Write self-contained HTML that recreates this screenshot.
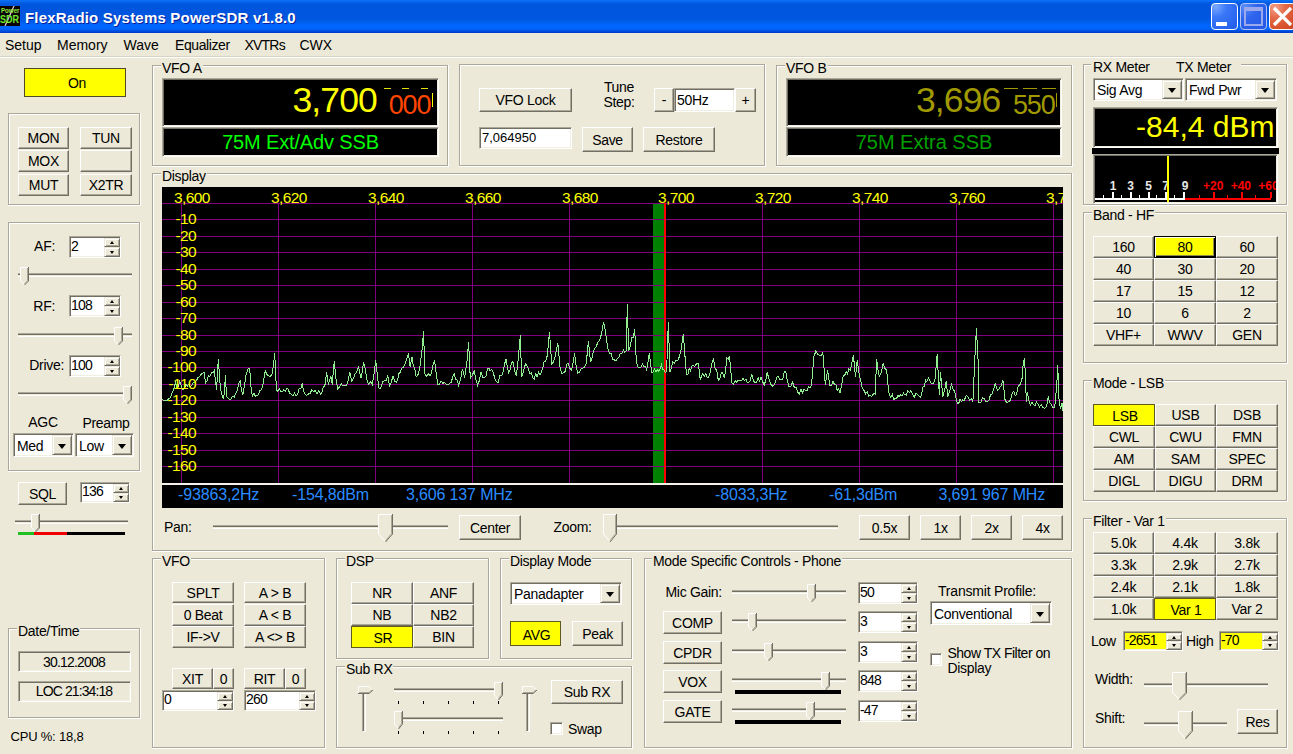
<!DOCTYPE html>
<html><head><meta charset="utf-8"><title>PowerSDR</title>
<style>
html,body{margin:0;padding:0}
body{-webkit-font-smoothing:antialiased;width:1293px;height:754px;overflow:hidden;position:relative;background:#ECE9D8;font-family:"Liberation Sans",sans-serif;font-size:13.5px;color:#000}
.a{position:absolute}
.t{position:absolute;white-space:nowrap}
.b{position:absolute;letter-spacing:-0.3px;box-sizing:border-box;background:#ECE9D8;border:1px solid;border-color:#fff #716F64 #716F64 #fff;box-shadow:inset -1px -1px #ACA899;display:flex;align-items:center;justify-content:center;white-space:nowrap;overflow:hidden}
.yb{position:absolute;letter-spacing:-0.3px;box-sizing:border-box;background:#FFFF00;border:1px solid #5E5A20;padding:2px 0 0 2px;display:flex;align-items:center;justify-content:center;white-space:nowrap;overflow:hidden}
.sb{position:absolute;box-sizing:border-box;background:#ECE9D8;border:1px solid;border-color:#ECE9D8 #716F64 #716F64 #ECE9D8;box-shadow:inset 1px 1px #fff,inset -1px -1px #ACA899}
.cb{position:absolute;box-sizing:border-box;background:#ECE9D8;border:1px solid;border-color:#ECE9D8 #716F64 #716F64 #ECE9D8;box-shadow:inset 1px 1px #fff,inset -1px -1px #ACA899}
.g{position:absolute;box-sizing:border-box;border:1px solid #ACA899;box-shadow:inset 1px 1px #fff,1px 1px #fff,0 1px #fff,1px 0 #fff}
.gl{position:absolute;letter-spacing:-0.3px;background:#ECE9D8;padding:0 1px;line-height:16px;white-space:nowrap}
.s{position:absolute;box-sizing:border-box;border:1px solid;border-color:#ACA899 #fff #fff #ACA899;box-shadow:inset 1px 1px #716F64,inset -1px -1px #F1EFE2}
.tr{position:absolute;box-sizing:border-box;border-top:1px solid #ACA899;border-bottom:1px solid #fff;box-shadow:inset 0 1px #716F64}
</style></head><body>
<div class="a" style="left:0;top:0;width:1293px;height:33px;background:linear-gradient(to bottom,#0A74F8 0px,#0A6AF0 1px,#045CE4 3px,#0055DD 5px,#0056DF 18px,#005EEA 22px,#0066FF 25px,#0064FC 29px,#0050E0 31px,#0038C4 33px)"></div>
<svg class="a" style="left:0px;top:6px" width="20" height="20" viewBox="0 0 20 20">
<rect x="0" y="0" width="20" height="20" fill="#0a0208"/>
<line x1="14" y1="0" x2="5" y2="20" stroke="#e0d0e0" stroke-width="1.2"/>
<text x="1" y="6.8" font-family="Liberation Sans" font-size="6.5" font-weight="bold" fill="#8CE83A" textLength="18.5" lengthAdjust="spacingAndGlyphs">Power</text>
<text x="0" y="16.6" font-family="Liberation Sans" font-size="10.5" font-weight="bold" fill="#6EEA2E" textLength="19" lengthAdjust="spacingAndGlyphs">SDR</text>
</svg>
<div class="t" style="left:25px;top:9px;font-size:15px;line-height:18px;font-weight:bold;color:#fff;letter-spacing:0.2px;text-shadow:1px 1px 0 #0A1E9A">FlexRadio Systems PowerSDR v1.8.0</div>
<div class="a" style="left:1211px;top:3px;width:27px;height:27px;box-sizing:border-box;border:1px solid #fff;border-radius:4px;background:radial-gradient(circle at 15% 10%,#7AA8FF 0%,#3A78F8 35%,#2A66F0 75%,#2258E0 100%)"></div>
<div class="a" style="left:1240px;top:3px;width:27px;height:27px;box-sizing:border-box;border:1px solid #B4C4F4;border-radius:4px;background:radial-gradient(circle at 15% 10%,#5A8CF8 0%,#2E64EE 40%,#2458E4 100%)"></div>
<div class="a" style="left:1269px;top:3px;width:27px;height:27px;box-sizing:border-box;border:1px solid #fff;border-radius:4px;background:radial-gradient(circle at 20% 15%,#F2A088 0%,#E46A48 35%,#D8532E 70%,#C84420 100%)"></div>
<div class="a" style="left:1216px;top:22px;width:11px;height:4px;background:#fff"></div>
<div class="a" style="left:1244px;top:7px;width:19px;height:19px;border:2px solid #9CA8EC;border-top-width:4px;box-sizing:border-box"></div>
<svg class="a" style="left:1269px;top:3px" width="26" height="27"><line x1="5" y1="5" x2="22" y2="22" stroke="#fff" stroke-width="3.2"/><line x1="22" y1="5" x2="5" y2="22" stroke="#fff" stroke-width="3.2"/></svg>
<div class="t" style="left:5px;top:37.17px;font-size:14px;line-height:17px;color:#000;font-weight:normal;letter-spacing:0px">Setup</div>
<div class="t" style="left:57px;top:37.17px;font-size:14px;line-height:17px;color:#000;font-weight:normal;letter-spacing:0px">Memory</div>
<div class="t" style="left:123.5px;top:37.17px;font-size:14px;line-height:17px;color:#000;font-weight:normal;letter-spacing:0px">Wave</div>
<div class="t" style="left:175px;top:37.17px;font-size:14px;line-height:17px;color:#000;font-weight:normal;letter-spacing:-0.4px">Equalizer</div>
<div class="t" style="left:244.5px;top:37.17px;font-size:14px;line-height:17px;color:#000;font-weight:normal;letter-spacing:-0.8px">XVTRs</div>
<div class="t" style="left:299.5px;top:37.17px;font-size:14px;line-height:17px;color:#000;font-weight:normal;letter-spacing:0px">CWX</div>
<div class="a" style="left:0px;top:57px;width:1293px;height:1px;background:#fff"></div>
<div class="a" style="left:0px;top:56px;width:1293px;height:1px;background:#D8D4C4"></div>
<div class="a" style="left:24px;top:68px;width:102px;height:29px;box-sizing:border-box;border:1px solid #4E4B26;background:#FFFF00"></div>
<div class="t" style="left:-223px;width:600px;text-align:center;top:75.17px;font-size:14px;line-height:17px;color:#000;font-weight:normal;letter-spacing:-0.3px;">On</div>
<div class="g" style="left:8px;top:113px;width:132px;height:92px"></div>
<div class="b" style="left:18px;top:127px;width:51px;height:22px;font-size:14px;"><span style="">MON</span></div>
<div class="b" style="left:80px;top:127px;width:52px;height:22px;font-size:14px;"><span style="">TUN</span></div>
<div class="b" style="left:18px;top:150px;width:51px;height:22px;font-size:14px;"><span style="">MOX</span></div>
<div class="b" style="left:80px;top:150px;width:52px;height:22px;font-size:14px;"><span style=""></span></div>
<div class="b" style="left:18px;top:174px;width:51px;height:22px;font-size:14px;"><span style="">MUT</span></div>
<div class="b" style="left:80px;top:174px;width:52px;height:22px;font-size:14px;"><span style="">X2TR</span></div>
<div class="g" style="left:8px;top:222px;width:132px;height:249px"></div>
<div class="t" style="left:-545px;width:600px;text-align:right;top:237.67px;font-size:14px;line-height:17px;color:#000;font-weight:normal;letter-spacing:-0.3px;">AF:</div>
<div class="s" style="left:69px;top:236px;width:52px;height:22px;background:#fff;"></div>
<div class="sb" style="left:104px;top:238px;width:16px;height:9px"></div>
<div class="sb" style="left:104px;top:247px;width:16px;height:10px"></div>
<div class="a" style="left:110px;top:241px;width:0;height:0;border-left:2.5px solid transparent;border-right:2.5px solid transparent;border-bottom:3px solid #000"></div>
<div class="a" style="left:110px;top:251px;width:0;height:0;border-left:2.5px solid transparent;border-right:2.5px solid transparent;border-top:3px solid #000"></div>
<div class="t" style="left:71px;top:237.66px;font-size:14px;line-height:17px;color:#000;font-weight:normal;letter-spacing:-0.8px">2</div>
<div class="tr" style="left:18px;top:273px;width:114px;height:4px"></div>
<svg class="a" style="left:20px;top:267px" width="10" height="19" viewBox="0 0 10 19">
<polygon points="0,0 9,0 9,14 4.5,18 0,14" fill="#ECE9D8"/>
<polyline points="0.5,14 0.5,0.5 8,0.5" fill="none" stroke="#fff" stroke-width="1"/>
<polyline points="0.5,14 4.5,17.5" fill="none" stroke="#fff" stroke-width="1"/>
<polyline points="8.5,0 8.5,14 4.5,18" fill="none" stroke="#716F64" stroke-width="1"/>
<polyline points="7.5,1 7.5,13.5 4.5,16.8" fill="none" stroke="#ACA899" stroke-width="1"/>
</svg>
<div class="t" style="left:-545px;width:600px;text-align:right;top:297.67px;font-size:14px;line-height:17px;color:#000;font-weight:normal;letter-spacing:-0.3px;">RF:</div>
<div class="s" style="left:69px;top:295px;width:52px;height:22px;background:#fff;"></div>
<div class="sb" style="left:104px;top:297px;width:16px;height:9px"></div>
<div class="sb" style="left:104px;top:306px;width:16px;height:10px"></div>
<div class="a" style="left:110px;top:300px;width:0;height:0;border-left:2.5px solid transparent;border-right:2.5px solid transparent;border-bottom:3px solid #000"></div>
<div class="a" style="left:110px;top:310px;width:0;height:0;border-left:2.5px solid transparent;border-right:2.5px solid transparent;border-top:3px solid #000"></div>
<div class="t" style="left:71px;top:296.66px;font-size:14px;line-height:17px;color:#000;font-weight:normal;letter-spacing:-0.8px">108</div>
<div class="tr" style="left:18px;top:333px;width:114px;height:4px"></div>
<svg class="a" style="left:114px;top:327px" width="10" height="19" viewBox="0 0 10 19">
<polygon points="0,0 9,0 9,14 4.5,18 0,14" fill="#ECE9D8"/>
<polyline points="0.5,14 0.5,0.5 8,0.5" fill="none" stroke="#fff" stroke-width="1"/>
<polyline points="0.5,14 4.5,17.5" fill="none" stroke="#fff" stroke-width="1"/>
<polyline points="8.5,0 8.5,14 4.5,18" fill="none" stroke="#716F64" stroke-width="1"/>
<polyline points="7.5,1 7.5,13.5 4.5,16.8" fill="none" stroke="#ACA899" stroke-width="1"/>
</svg>
<div class="t" style="left:-536px;width:600px;text-align:right;top:356.67px;font-size:14px;line-height:17px;color:#000;font-weight:normal;letter-spacing:-0.3px;">Drive:</div>
<div class="s" style="left:69px;top:355px;width:52px;height:22px;background:#fff;"></div>
<div class="sb" style="left:104px;top:357px;width:16px;height:9px"></div>
<div class="sb" style="left:104px;top:366px;width:16px;height:10px"></div>
<div class="a" style="left:110px;top:360px;width:0;height:0;border-left:2.5px solid transparent;border-right:2.5px solid transparent;border-bottom:3px solid #000"></div>
<div class="a" style="left:110px;top:370px;width:0;height:0;border-left:2.5px solid transparent;border-right:2.5px solid transparent;border-top:3px solid #000"></div>
<div class="t" style="left:71px;top:356.66px;font-size:14px;line-height:17px;color:#000;font-weight:normal;letter-spacing:-0.8px">100</div>
<div class="tr" style="left:18px;top:392px;width:114px;height:4px"></div>
<svg class="a" style="left:123px;top:386px" width="10" height="19" viewBox="0 0 10 19">
<polygon points="0,0 9,0 9,14 4.5,18 0,14" fill="#ECE9D8"/>
<polyline points="0.5,14 0.5,0.5 8,0.5" fill="none" stroke="#fff" stroke-width="1"/>
<polyline points="0.5,14 4.5,17.5" fill="none" stroke="#fff" stroke-width="1"/>
<polyline points="8.5,0 8.5,14 4.5,18" fill="none" stroke="#716F64" stroke-width="1"/>
<polyline points="7.5,1 7.5,13.5 4.5,16.8" fill="none" stroke="#ACA899" stroke-width="1"/>
</svg>
<div class="t" style="left:-257px;width:600px;text-align:center;top:413.67px;font-size:14px;line-height:17px;color:#000;font-weight:normal;letter-spacing:-0.3px;">AGC</div>
<div class="t" style="left:-194px;width:600px;text-align:center;top:414.67px;font-size:14px;line-height:17px;color:#000;font-weight:normal;letter-spacing:-0.3px;">Preamp</div>
<div class="s" style="left:13px;top:433px;width:61px;height:24px;background:#fff;"></div>
<div class="cb" style="left:52px;top:435px;width:20px;height:20px"></div>
<div class="a" style="left:57.5px;top:443.5px;width:0;height:0;border-left:4.5px solid transparent;border-right:4.5px solid transparent;border-top:5px solid #000"></div>
<div class="t" style="left:17px;top:437.66px;font-size:14px;line-height:17px;color:#000;font-weight:normal;letter-spacing:-0.3px;">Med</div>
<div class="s" style="left:75px;top:433px;width:59px;height:24px;background:#fff;"></div>
<div class="cb" style="left:112px;top:435px;width:20px;height:20px"></div>
<div class="a" style="left:117.5px;top:443.5px;width:0;height:0;border-left:4.5px solid transparent;border-right:4.5px solid transparent;border-top:5px solid #000"></div>
<div class="t" style="left:79px;top:437.66px;font-size:14px;line-height:17px;color:#000;font-weight:normal;letter-spacing:-0.3px;">Low</div>
<div class="b" style="left:18px;top:482px;width:49px;height:23px;font-size:14px;"><span style="">SQL</span></div>
<div class="s" style="left:80px;top:482px;width:50px;height:21px;background:#fff;"></div>
<div class="sb" style="left:113px;top:484px;width:16px;height:9px"></div>
<div class="sb" style="left:113px;top:493px;width:16px;height:9px"></div>
<div class="a" style="left:119px;top:487px;width:0;height:0;border-left:2.5px solid transparent;border-right:2.5px solid transparent;border-bottom:3px solid #000"></div>
<div class="a" style="left:119px;top:496px;width:0;height:0;border-left:2.5px solid transparent;border-right:2.5px solid transparent;border-top:3px solid #000"></div>
<div class="t" style="left:82px;top:483.16px;font-size:14px;line-height:17px;color:#000;font-weight:normal;letter-spacing:-0.8px">136</div>
<div class="tr" style="left:15px;top:520px;width:113px;height:4px"></div>
<svg class="a" style="left:31px;top:514px" width="10" height="19" viewBox="0 0 10 19">
<polygon points="0,0 9,0 9,14 4.5,18 0,14" fill="#ECE9D8"/>
<polyline points="0.5,14 0.5,0.5 8,0.5" fill="none" stroke="#fff" stroke-width="1"/>
<polyline points="0.5,14 4.5,17.5" fill="none" stroke="#fff" stroke-width="1"/>
<polyline points="8.5,0 8.5,14 4.5,18" fill="none" stroke="#716F64" stroke-width="1"/>
<polyline points="7.5,1 7.5,13.5 4.5,16.8" fill="none" stroke="#ACA899" stroke-width="1"/>
</svg>
<div class="a" style="left:18px;top:532px;width:16px;height:3px;background:#20C020"></div>
<div class="a" style="left:34px;top:532px;width:33px;height:3px;background:#F00000"></div>
<div class="a" style="left:67px;top:532px;width:58px;height:3px;background:#000"></div>
<div class="g" style="left:8px;top:628px;width:132px;height:90px"></div>
<div class="gl" style="left:17px;top:623px;font-size:14px">Date/Time</div>
<div class="s" style="left:18px;top:651px;width:113px;height:21px;background:#ECE9D8;"></div>
<div class="t" style="left:-226px;width:600px;text-align:center;top:654.17px;font-size:14px;line-height:17px;color:#000;font-weight:normal;letter-spacing:-0.8px">30.12.2008</div>
<div class="s" style="left:18px;top:681px;width:113px;height:21px;background:#ECE9D8;"></div>
<div class="t" style="left:-226px;width:600px;text-align:center;top:683.17px;font-size:14px;line-height:17px;color:#000;font-weight:normal;letter-spacing:-0.9px">LOC 21:34:18</div>
<div class="t" style="left:10.5px;top:729.30px;font-size:13px;line-height:16px;color:#000;font-weight:normal;letter-spacing:-0.2px">CPU %: 18,8</div>
<div class="g" style="left:152px;top:65px;width:296px;height:101px"></div>
<div class="gl" style="left:161px;top:60px;font-size:14px">VFO A</div>
<div class="s" style="left:162px;top:78px;width:277px;height:49px;background:#000;border-color:#ACA899 #fff #fff #ACA899"></div>
<div class="t" style="left:292.5px;top:79.12px;font-size:35.5px;line-height:43px;color:#FFFF00;font-weight:normal;letter-spacing:-0.9px">3,700</div>
<div class="a" style="left:164px;top:80px;width:273px;height:45px;overflow:hidden">
<div class="t" style="left:224.8px;top:9.28px;font-size:27px;line-height:32px;color:#FF4500;font-weight:normal;letter-spacing:-1.2px">000</div>
<div class="a" style="left:268px;top:13px;width:1px;height:14px;background:#FFFF00"></div>
</div>
<div class="a" style="left:384px;top:88px;width:7px;height:1px;background:#E0E000"></div>
<div class="a" style="left:402px;top:88px;width:7px;height:1px;background:#E0E000"></div>
<div class="a" style="left:421px;top:88px;width:7px;height:1px;background:#E0E000"></div>
<div class="s" style="left:162px;top:127px;width:277px;height:30px;background:#000;"></div>
<div class="t" style="left:0.5px;width:600px;text-align:center;top:129.59px;font-size:20px;line-height:24px;color:#00FF00;font-weight:normal;letter-spacing:-0.15px">75M Ext/Adv SSB</div>
<div class="g" style="left:459px;top:64px;width:306px;height:102px"></div>
<div class="b" style="left:479px;top:88px;width:93px;height:24px;font-size:14px;"><span style="">VFO Lock</span></div>
<div class="t" style="left:319px;width:600px;text-align:center;top:78.67px;font-size:14px;line-height:17px;color:#000;font-weight:normal;letter-spacing:-0.3px;">Tune</div>
<div class="t" style="left:319px;width:600px;text-align:center;top:93.67px;font-size:14px;line-height:17px;color:#000;font-weight:normal;letter-spacing:-0.3px;">Step:</div>
<div class="b" style="left:654px;top:88px;width:20px;height:24px;font-size:14px;"><span style="">-</span></div>
<div class="s" style="left:674px;top:88px;width:61px;height:24px;background:#fff;"></div>
<div class="t" style="left:677px;top:91.67px;font-size:14px;line-height:17px;color:#000;font-weight:normal;letter-spacing:-0.3px;">50Hz</div>
<div class="b" style="left:735px;top:88px;width:21px;height:24px;font-size:14px;"><span style="">+</span></div>
<div class="s" style="left:479px;top:127px;width:93px;height:22px;background:#fff;"></div>
<div class="t" style="left:482px;top:129.80px;font-size:13px;line-height:16px;color:#000;font-weight:normal;">7,064950</div>
<div class="b" style="left:582px;top:127px;width:51px;height:25px;font-size:14px;"><span style="">Save</span></div>
<div class="b" style="left:643px;top:127px;width:72px;height:25px;font-size:14px;"><span style="">Restore</span></div>
<div class="g" style="left:776px;top:65px;width:296px;height:101px"></div>
<div class="gl" style="left:785px;top:60px;font-size:14px">VFO B</div>
<div class="s" style="left:786px;top:78px;width:276px;height:49px;background:#000;"></div>
<div class="t" style="left:916px;top:79.12px;font-size:35.5px;line-height:43px;color:#A09A00;font-weight:normal;letter-spacing:-0.9px">3,696</div>
<div class="a" style="left:788px;top:80px;width:272px;height:45px;overflow:hidden">
<div class="t" style="left:225px;top:9.28px;font-size:27px;line-height:32px;color:#A09A00;font-weight:normal;letter-spacing:-1.2px">550</div>
<div class="a" style="left:268px;top:13px;width:1px;height:14px;background:#A09A00"></div>
</div>
<div class="a" style="left:1004px;top:88px;width:14px;height:1px;background:#A09A00"></div>
<div class="a" style="left:1023px;top:88px;width:14px;height:1px;background:#A09A00"></div>
<div class="a" style="left:1042px;top:88px;width:14px;height:1px;background:#A09A00"></div>
<div class="s" style="left:786px;top:127px;width:276px;height:30px;background:#000;"></div>
<div class="t" style="left:624px;width:600px;text-align:center;top:129.59px;font-size:20px;line-height:24px;color:#00A000;font-weight:normal;">75M Extra SSB</div>
<div class="g" style="left:1083px;top:64px;width:204px;height:141px"></div>
<div class="a" style="left:1091px;top:60px;width:150px;height:9px;background:#ECE9D8"></div>
<div class="t" style="left:1093px;top:58.67px;font-size:14px;line-height:17px;color:#000;font-weight:normal;letter-spacing:-0.3px;">RX Meter</div>
<div class="t" style="left:1176px;top:58.67px;font-size:14px;line-height:17px;color:#000;font-weight:normal;letter-spacing:-0.3px;">TX Meter</div>
<div class="s" style="left:1093px;top:78px;width:91px;height:23px;background:#fff;"></div>
<div class="cb" style="left:1162px;top:80px;width:20px;height:19px"></div>
<div class="a" style="left:1167.5px;top:88.0px;width:0;height:0;border-left:4.5px solid transparent;border-right:4.5px solid transparent;border-top:5px solid #000"></div>
<div class="t" style="left:1097px;top:82.16px;font-size:14px;line-height:17px;color:#000;font-weight:normal;letter-spacing:-0.3px;">Sig Avg</div>
<div class="s" style="left:1185px;top:78px;width:92px;height:23px;background:#fff;"></div>
<div class="cb" style="left:1255px;top:80px;width:20px;height:19px"></div>
<div class="a" style="left:1260.5px;top:88.0px;width:0;height:0;border-left:4.5px solid transparent;border-right:4.5px solid transparent;border-top:5px solid #000"></div>
<div class="t" style="left:1189px;top:82.16px;font-size:14px;line-height:17px;color:#000;font-weight:normal;letter-spacing:-0.3px;">Fwd Pwr</div>
<div class="s" style="left:1093px;top:107px;width:185px;height:41px;background:#000;"></div>
<div class="t" style="left:674.5px;width:600px;text-align:right;top:108.58px;font-size:30px;line-height:36px;color:#FFFF00;font-weight:normal;">-84,4 dBm</div>
<div class="a" style="left:1092px;top:148px;width:187px;height:6px;background:#000"></div>
<div class="s" style="left:1093px;top:154px;width:185px;height:50px;background:#000;"></div>
<div class="a" style="left:1095px;top:198px;width:90px;height:2px;background:#fff"></div>
<div class="a" style="left:1185px;top:198px;width:86px;height:2px;background:#F00"></div>
<div class="a" style="left:1112px;top:192px;width:2px;height:6px;background:#fff"></div>
<div class="a" style="left:1130px;top:192px;width:2px;height:6px;background:#fff"></div>
<div class="a" style="left:1148px;top:192px;width:2px;height:6px;background:#fff"></div>
<div class="a" style="left:1165px;top:192px;width:2px;height:6px;background:#fff"></div>
<div class="a" style="left:1183px;top:192px;width:2px;height:6px;background:#fff"></div>
<div class="a" style="left:1103px;top:195px;width:1px;height:3px;background:#fff"></div>
<div class="a" style="left:1121px;top:195px;width:1px;height:3px;background:#fff"></div>
<div class="a" style="left:1139px;top:195px;width:1px;height:3px;background:#fff"></div>
<div class="a" style="left:1156px;top:195px;width:1px;height:3px;background:#fff"></div>
<div class="a" style="left:1174px;top:195px;width:1px;height:3px;background:#fff"></div>
<div class="a" style="left:1213px;top:192px;width:2px;height:6px;background:#F00"></div>
<div class="a" style="left:1241px;top:192px;width:2px;height:6px;background:#F00"></div>
<div class="a" style="left:1270px;top:192px;width:2px;height:6px;background:#F00"></div>
<div class="a" style="left:1199px;top:195px;width:1px;height:3px;background:#F00"></div>
<div class="a" style="left:1227px;top:195px;width:1px;height:3px;background:#F00"></div>
<div class="a" style="left:1255px;top:195px;width:1px;height:3px;background:#F00"></div>
<div class="t" style="left:813.2px;width:600px;text-align:center;top:178.93px;font-size:12px;line-height:14px;color:#E8E8E8;font-weight:bold;">1</div>
<div class="t" style="left:830.5px;width:600px;text-align:center;top:178.93px;font-size:12px;line-height:14px;color:#E8E8E8;font-weight:bold;">3</div>
<div class="t" style="left:848.5px;width:600px;text-align:center;top:178.93px;font-size:12px;line-height:14px;color:#E8E8E8;font-weight:bold;">5</div>
<div class="t" style="left:865.5px;width:600px;text-align:center;top:178.93px;font-size:12px;line-height:14px;color:#E8E8E8;font-weight:bold;">7</div>
<div class="t" style="left:885px;width:600px;text-align:center;top:178.93px;font-size:12px;line-height:14px;color:#E8E8E8;font-weight:bold;">9</div>
<div class="a" style="left:1095px;top:156px;width:181px;height:46px;overflow:hidden">
<div class="t" style="left:-181.79999999999995px;width:600px;text-align:center;top:22.93px;font-size:12px;line-height:14px;color:#FF0000;font-weight:bold;">+20</div>
<div class="t" style="left:-154.20000000000005px;width:600px;text-align:center;top:22.93px;font-size:12px;line-height:14px;color:#FF0000;font-weight:bold;">+40</div>
<div class="t" style="left:-126.5px;width:600px;text-align:center;top:22.93px;font-size:12px;line-height:14px;color:#FF0000;font-weight:bold;">+60</div>
</div>
<div class="a" style="left:1167px;top:156px;width:2px;height:46px;background:#FFFF00"></div>
<div class="g" style="left:1083px;top:212px;width:204px;height:151px"></div>
<div class="gl" style="left:1092px;top:207px;font-size:14px">Band - HF</div>
<div class="b" style="left:1093px;top:236px;width:61px;height:22px;font-size:14px;"><span style="">160</span></div>
<div class="a" style="left:1154px;top:236px;width:62px;height:22px;box-sizing:border-box;background:#FFFF00;border:1px solid #000;box-shadow:inset 1px 1px #FFFFE8,inset -1px -1px #000,inset -2px -2px #8F8B4A;display:flex;align-items:center;justify-content:center;font-size:14px;letter-spacing:-0.3px"><span>80</span></div>
<div class="b" style="left:1216px;top:236px;width:62px;height:22px;font-size:14px;"><span style="">60</span></div>
<div class="b" style="left:1093px;top:258px;width:61px;height:22px;font-size:14px;"><span style="">40</span></div>
<div class="b" style="left:1154px;top:258px;width:62px;height:22px;font-size:14px;"><span style="">30</span></div>
<div class="b" style="left:1216px;top:258px;width:62px;height:22px;font-size:14px;"><span style="">20</span></div>
<div class="b" style="left:1093px;top:280px;width:61px;height:22px;font-size:14px;"><span style="">17</span></div>
<div class="b" style="left:1154px;top:280px;width:62px;height:22px;font-size:14px;"><span style="">15</span></div>
<div class="b" style="left:1216px;top:280px;width:62px;height:22px;font-size:14px;"><span style="">12</span></div>
<div class="b" style="left:1093px;top:302px;width:61px;height:22px;font-size:14px;"><span style="">10</span></div>
<div class="b" style="left:1154px;top:302px;width:62px;height:22px;font-size:14px;"><span style="">6</span></div>
<div class="b" style="left:1216px;top:302px;width:62px;height:22px;font-size:14px;"><span style="">2</span></div>
<div class="b" style="left:1093px;top:324px;width:61px;height:22px;font-size:14px;"><span style="">VHF+</span></div>
<div class="b" style="left:1154px;top:324px;width:62px;height:22px;font-size:14px;"><span style="">WWV</span></div>
<div class="b" style="left:1216px;top:324px;width:62px;height:22px;font-size:14px;"><span style="">GEN</span></div>
<div class="g" style="left:1083px;top:380px;width:204px;height:121px"></div>
<div class="gl" style="left:1092px;top:375px;font-size:14px">Mode - LSB</div>
<div class="yb" style="left:1093px;top:404px;width:62px;height:22px;font-size:14px;"><span>LSB</span></div>
<div class="b" style="left:1155px;top:404px;width:61px;height:22px;font-size:14px;"><span style="">USB</span></div>
<div class="b" style="left:1216px;top:404px;width:62px;height:22px;font-size:14px;"><span style="">DSB</span></div>
<div class="b" style="left:1093px;top:426px;width:62px;height:22px;font-size:14px;"><span style="">CWL</span></div>
<div class="b" style="left:1155px;top:426px;width:61px;height:22px;font-size:14px;"><span style="">CWU</span></div>
<div class="b" style="left:1216px;top:426px;width:62px;height:22px;font-size:14px;"><span style="">FMN</span></div>
<div class="b" style="left:1093px;top:448px;width:62px;height:22px;font-size:14px;"><span style="">AM</span></div>
<div class="b" style="left:1155px;top:448px;width:61px;height:22px;font-size:14px;"><span style="">SAM</span></div>
<div class="b" style="left:1216px;top:448px;width:62px;height:22px;font-size:14px;"><span style="">SPEC</span></div>
<div class="b" style="left:1093px;top:470px;width:62px;height:22px;font-size:14px;"><span style="">DIGL</span></div>
<div class="b" style="left:1155px;top:470px;width:61px;height:22px;font-size:14px;"><span style="">DIGU</span></div>
<div class="b" style="left:1216px;top:470px;width:62px;height:22px;font-size:14px;"><span style="">DRM</span></div>
<div class="g" style="left:1083px;top:518px;width:204px;height:230px"></div>
<div class="gl" style="left:1092px;top:513px;font-size:14px">Filter - Var 1</div>
<div class="b" style="left:1093px;top:532px;width:61px;height:22px;font-size:14px;"><span style="">5.0k</span></div>
<div class="b" style="left:1154px;top:532px;width:62px;height:22px;font-size:14px;"><span style="">4.4k</span></div>
<div class="b" style="left:1216px;top:532px;width:62px;height:22px;font-size:14px;"><span style="">3.8k</span></div>
<div class="b" style="left:1093px;top:554px;width:61px;height:22px;font-size:14px;"><span style="">3.3k</span></div>
<div class="b" style="left:1154px;top:554px;width:62px;height:22px;font-size:14px;"><span style="">2.9k</span></div>
<div class="b" style="left:1216px;top:554px;width:62px;height:22px;font-size:14px;"><span style="">2.7k</span></div>
<div class="b" style="left:1093px;top:576px;width:61px;height:22px;font-size:14px;"><span style="">2.4k</span></div>
<div class="b" style="left:1154px;top:576px;width:62px;height:22px;font-size:14px;"><span style="">2.1k</span></div>
<div class="b" style="left:1216px;top:576px;width:62px;height:22px;font-size:14px;"><span style="">1.8k</span></div>
<div class="b" style="left:1093px;top:598px;width:61px;height:22px;font-size:14px;"><span style="">1.0k</span></div>
<div class="yb" style="left:1154px;top:598px;width:62px;height:22px;font-size:14px;"><span>Var 1</span></div>
<div class="b" style="left:1216px;top:598px;width:62px;height:22px;font-size:14px;"><span style="">Var 2</span></div>
<div class="t" style="left:1091px;top:632.67px;font-size:14px;line-height:17px;color:#000;font-weight:normal;letter-spacing:-0.3px;">Low</div>
<div class="s" style="left:1123px;top:631px;width:60px;height:20px;background:#fff;"></div>
<div class="a" style="left:1125px;top:633px;width:41px;height:16px;background:#FFFF00"></div>
<div class="sb" style="left:1166px;top:633px;width:16px;height:8px"></div>
<div class="sb" style="left:1166px;top:641px;width:16px;height:9px"></div>
<div class="a" style="left:1172px;top:636px;width:0;height:0;border-left:2.5px solid transparent;border-right:2.5px solid transparent;border-bottom:3px solid #000"></div>
<div class="a" style="left:1172px;top:644px;width:0;height:0;border-left:2.5px solid transparent;border-right:2.5px solid transparent;border-top:3px solid #000"></div>
<div class="t" style="left:1125px;top:631.66px;font-size:14px;line-height:17px;color:#000;font-weight:normal;letter-spacing:-0.8px">-2651</div>
<div class="t" style="left:1186px;top:632.67px;font-size:14px;line-height:17px;color:#000;font-weight:normal;letter-spacing:-0.3px;">High</div>
<div class="s" style="left:1219px;top:631px;width:60px;height:20px;background:#fff;"></div>
<div class="a" style="left:1221px;top:633px;width:41px;height:16px;background:#FFFF00"></div>
<div class="sb" style="left:1262px;top:633px;width:16px;height:8px"></div>
<div class="sb" style="left:1262px;top:641px;width:16px;height:9px"></div>
<div class="a" style="left:1268px;top:636px;width:0;height:0;border-left:2.5px solid transparent;border-right:2.5px solid transparent;border-bottom:3px solid #000"></div>
<div class="a" style="left:1268px;top:644px;width:0;height:0;border-left:2.5px solid transparent;border-right:2.5px solid transparent;border-top:3px solid #000"></div>
<div class="t" style="left:1221px;top:631.66px;font-size:14px;line-height:17px;color:#000;font-weight:normal;letter-spacing:-0.8px">-70</div>
<div class="t" style="left:1095px;top:670.67px;font-size:14px;line-height:17px;color:#000;font-weight:normal;letter-spacing:-0.3px;">Width:</div>
<div class="tr" style="left:1144px;top:683px;width:124px;height:4px"></div>
<svg class="a" style="left:1172px;top:672px" width="16" height="29" viewBox="0 0 16 29">
<polygon points="0,0 15,0 15,21 7.5,28 0,21" fill="#ECE9D8"/>
<polyline points="0.5,21 0.5,0.5 14,0.5" fill="none" stroke="#fff" stroke-width="1"/>
<polyline points="0.5,21 7.5,27.5" fill="none" stroke="#fff" stroke-width="1"/>
<polyline points="14.5,0 14.5,21 7.5,28" fill="none" stroke="#716F64" stroke-width="1"/>
<polyline points="13.5,1 13.5,20.5 7.5,26.8" fill="none" stroke="#ACA899" stroke-width="1"/>
</svg>
<div class="t" style="left:1095px;top:710.17px;font-size:14px;line-height:17px;color:#000;font-weight:normal;letter-spacing:-0.3px;">Shift:</div>
<div class="tr" style="left:1144px;top:722px;width:83px;height:4px"></div>
<svg class="a" style="left:1178px;top:711px" width="16" height="29" viewBox="0 0 16 29">
<polygon points="0,0 15,0 15,20 7.5,28 0,20" fill="#ECE9D8"/>
<polyline points="0.5,20 0.5,0.5 14,0.5" fill="none" stroke="#fff" stroke-width="1"/>
<polyline points="0.5,20 7.5,27.5" fill="none" stroke="#fff" stroke-width="1"/>
<polyline points="14.5,0 14.5,20 7.5,28" fill="none" stroke="#716F64" stroke-width="1"/>
<polyline points="13.5,1 13.5,19.5 7.5,26.8" fill="none" stroke="#ACA899" stroke-width="1"/>
</svg>
<div class="b" style="left:1237px;top:709px;width:41px;height:25px;font-size:14px;"><span style="">Res</span></div>
<div class="g" style="left:152px;top:173px;width:920px;height:378px"></div>
<div class="gl" style="left:161px;top:168px;font-size:14px">Display</div>
<div class="a" style="left:162px;top:187px;width:901px;height:296px;background:#000;overflow:hidden"></div>
<svg class="a" style="left:162px;top:187px" width="901" height="296" viewBox="162 187 901 296">
<line x1="162" y1="203.5" x2="1063" y2="203.5" stroke="#800080" stroke-width="1"/>
<line x1="162" y1="219.5" x2="1063" y2="219.5" stroke="#800080" stroke-width="1"/>
<line x1="162" y1="236.5" x2="1063" y2="236.5" stroke="#800080" stroke-width="1"/>
<line x1="162" y1="252.5" x2="1063" y2="252.5" stroke="#800080" stroke-width="1"/>
<line x1="162" y1="269.5" x2="1063" y2="269.5" stroke="#800080" stroke-width="1"/>
<line x1="162" y1="285.5" x2="1063" y2="285.5" stroke="#800080" stroke-width="1"/>
<line x1="162" y1="302.5" x2="1063" y2="302.5" stroke="#800080" stroke-width="1"/>
<line x1="162" y1="318.5" x2="1063" y2="318.5" stroke="#800080" stroke-width="1"/>
<line x1="162" y1="335.5" x2="1063" y2="335.5" stroke="#800080" stroke-width="1"/>
<line x1="162" y1="351.5" x2="1063" y2="351.5" stroke="#800080" stroke-width="1"/>
<line x1="162" y1="367.5" x2="1063" y2="367.5" stroke="#800080" stroke-width="1"/>
<line x1="162" y1="384.5" x2="1063" y2="384.5" stroke="#800080" stroke-width="1"/>
<line x1="162" y1="400.5" x2="1063" y2="400.5" stroke="#800080" stroke-width="1"/>
<line x1="162" y1="417.5" x2="1063" y2="417.5" stroke="#800080" stroke-width="1"/>
<line x1="162" y1="433.5" x2="1063" y2="433.5" stroke="#800080" stroke-width="1"/>
<line x1="162" y1="450.5" x2="1063" y2="450.5" stroke="#800080" stroke-width="1"/>
<line x1="162" y1="466.5" x2="1063" y2="466.5" stroke="#800080" stroke-width="1"/>
<rect x="653" y="203" width="11" height="280" fill="#008000"/>
<line x1="653" y1="203.5" x2="664" y2="203.5" stroke="#800080" stroke-width="1"/>
<line x1="653" y1="219.5" x2="664" y2="219.5" stroke="#800080" stroke-width="1"/>
<line x1="653" y1="236.5" x2="664" y2="236.5" stroke="#800080" stroke-width="1"/>
<line x1="653" y1="252.5" x2="664" y2="252.5" stroke="#800080" stroke-width="1"/>
<line x1="653" y1="269.5" x2="664" y2="269.5" stroke="#800080" stroke-width="1"/>
<line x1="653" y1="285.5" x2="664" y2="285.5" stroke="#800080" stroke-width="1"/>
<line x1="653" y1="302.5" x2="664" y2="302.5" stroke="#800080" stroke-width="1"/>
<line x1="653" y1="318.5" x2="664" y2="318.5" stroke="#800080" stroke-width="1"/>
<line x1="653" y1="335.5" x2="664" y2="335.5" stroke="#800080" stroke-width="1"/>
<line x1="653" y1="351.5" x2="664" y2="351.5" stroke="#800080" stroke-width="1"/>
<line x1="653" y1="367.5" x2="664" y2="367.5" stroke="#800080" stroke-width="1"/>
<line x1="653" y1="384.5" x2="664" y2="384.5" stroke="#800080" stroke-width="1"/>
<line x1="653" y1="400.5" x2="664" y2="400.5" stroke="#800080" stroke-width="1"/>
<line x1="653" y1="417.5" x2="664" y2="417.5" stroke="#800080" stroke-width="1"/>
<line x1="653" y1="433.5" x2="664" y2="433.5" stroke="#800080" stroke-width="1"/>
<line x1="653" y1="450.5" x2="664" y2="450.5" stroke="#800080" stroke-width="1"/>
<line x1="653" y1="466.5" x2="664" y2="466.5" stroke="#800080" stroke-width="1"/>
<line x1="181.5" y1="203" x2="181.5" y2="483" stroke="#800080" stroke-width="1"/>
<line x1="278.5" y1="203" x2="278.5" y2="483" stroke="#800080" stroke-width="1"/>
<line x1="375.5" y1="203" x2="375.5" y2="483" stroke="#800080" stroke-width="1"/>
<line x1="472.5" y1="203" x2="472.5" y2="483" stroke="#800080" stroke-width="1"/>
<line x1="569.5" y1="203" x2="569.5" y2="483" stroke="#800080" stroke-width="1"/>
<line x1="762.5" y1="203" x2="762.5" y2="483" stroke="#800080" stroke-width="1"/>
<line x1="859.5" y1="203" x2="859.5" y2="483" stroke="#800080" stroke-width="1"/>
<line x1="956.5" y1="203" x2="956.5" y2="483" stroke="#800080" stroke-width="1"/>
<line x1="1053.5" y1="203" x2="1053.5" y2="483" stroke="#800080" stroke-width="1"/>
<rect x="664" y="203" width="2" height="280" fill="#FF0000"/>
<polyline fill="none" stroke="#90EE90" stroke-width="1" shape-rendering="crispEdges" points="161.7,398.3 163.4,400.5 165.2,400.0 166.9,400.6 168.6,399.0 170.3,397.9 172.0,393.0 173.8,388.8 175.5,382.8 177.2,388.0 178.5,386.2 179.8,381.0 182.4,389.7 184.2,388.5 185.9,384.5 187.3,386.0 188.8,384.0 190.2,386.2 191.6,385.9 193.1,382.4 194.5,382.8 196.2,381.1 198.0,377.6 199.7,376.8 201.4,374.0 204.0,372.4 205.7,382.8 207.0,380.9 208.3,375.9 210.0,376.4 211.7,372.4 213.0,372.6 214.3,370.7 216.6,389.7 218.3,359.5 220.0,382.8 221.2,393.0 222.5,396.8 223.8,398.3 225.5,375.0 226.4,396.6 229.0,399.0 230.7,399.7 232.4,396.6 234.2,397.2 235.9,393.0 237.3,390.8 238.8,383.5 240.2,381.0 241.5,390.4 242.8,394.8 244.5,385.3 246.2,374.1 248.0,369.0 249.7,368.0 251.4,393.0 252.7,395.9 254.0,393.1 255.3,396.1 256.6,395.7 258.3,394.7 260.0,390.4 261.7,389.7 263.4,382.4 265.2,370.7 266.9,374.4 268.6,375.9 270.3,376.7 272.0,374.0 273.4,365.6 274.7,353.4 276.4,389.7 277.8,391.7 279.3,389.1 280.7,391.4 282.2,392.0 283.8,389.8 285.3,391.5 286.9,388.1 288.4,389.7 289.7,393.4 291.0,394.0 292.7,395.9 294.5,393.3 296.2,395.7 297.7,394.2 299.2,388.3 300.7,388.8 302.2,383.6 303.5,390.8 304.8,394.0 306.6,395.2 308.4,394.0 310.1,393.6 311.9,389.7 313.6,391.8 315.3,390.5 317.0,394.0 318.8,390.8 320.5,394.0 321.9,392.7 323.4,386.3 324.8,386.2 326.6,372.4 328.3,384.5 330.9,375.9 332.2,384.5 334.3,361.2 336.0,379.3 337.8,388.8 339.5,387.2 341.2,383.6 342.9,386.0 344.7,385.3 346.4,385.2 348.1,381.0 349.8,372.4 351.6,381.0 353.3,378.6 355.0,374.0 356.7,371.8 358.4,366.4 359.7,372.9 361.0,377.6 362.3,371.7 363.6,362.0 365.3,369.0 367.1,381.0 368.8,384.3 370.5,381.6 372.2,384.5 373.9,374.7 375.7,360.3 377.4,375.9 379.1,388.8 380.8,388.2 382.6,381.8 384.3,381.0 386.1,380.2 387.8,375.9 389.5,386.2 391.2,382.6 393.0,375.9 394.7,381.1 396.4,381.9 397.7,380.0 399.0,373.3 400.3,372.3 401.6,368.1 403.3,367.9 405.0,363.8 406.7,359.5 408.4,353.4 410.2,367.2 411.9,356.9 413.3,365.5 414.8,368.2 416.2,376.7 417.9,374.9 419.7,368.1 422.2,348.3 423.6,331.0 424.8,373.3 426.5,376.4 428.3,373.7 430.0,375.9 431.6,372.5 433.1,364.2 434.7,361.2 436.2,373.7 437.8,384.5 439.5,384.3 441.2,381.0 442.9,383.3 444.7,382.3 446.4,384.5 448.2,384.6 450.0,382.8 451.4,382.0 452.9,376.0 454.3,374.1 455.7,379.1 457.2,380.1 458.6,385.3 460.5,379.4 462.4,369.0 464.7,377.6 467.2,359.5 468.6,342.2 470.3,378.4 472.2,375.5 474.1,370.7 475.9,379.6 477.6,385.3 479.3,380.6 481.0,372.4 482.8,377.3 484.5,377.6 485.9,376.6 487.4,369.0 488.8,368.1 490.2,370.8 491.7,369.5 493.1,372.4 494.9,378.6 496.6,381.9 498.3,382.2 500.0,375.5 501.7,375.9 503.1,371.5 504.6,363.9 506.0,359.5 507.3,367.1 508.6,372.4 510.0,369.9 511.5,363.3 512.9,361.2 514.6,370.4 516.4,375.9 517.7,364.2 519.0,350.0 520.3,335.3 521.6,376.7 523.0,373.2 524.5,366.6 525.9,363.8 528.4,369.0 529.9,373.3 531.3,373.0 532.8,377.6 534.2,379.2 535.7,373.9 537.1,376.7 538.5,372.3 540.0,375.2 541.4,372.4 542.7,368.1 544.0,362.0 545.7,360.9 547.4,355.2 549.5,331.9 551.7,363.8 553.5,362.0 555.2,356.0 557.8,343.1 560.3,369.8 562.0,373.4 563.8,372.4 565.2,371.4 566.7,364.6 568.1,362.9 569.9,368.3 571.6,370.7 573.0,363.0 574.5,353.4 576.0,365.2 577.6,373.3 579.3,372.5 581.1,368.9 582.8,368.1 584.5,367.1 586.2,363.8 588.4,341.4 590.5,362.0 591.9,358.5 593.4,351.5 594.8,348.3 596.3,346.6 597.8,342.3 599.3,340.5 600.6,337.3 601.9,331.9 603.6,321.6 605.3,330.2 606.6,340.6 607.9,349.1 609.4,353.1 611.0,353.5 612.5,359.2 614.0,359.5 615.7,360.9 617.4,358.6 618.9,357.5 620.4,353.1 621.9,353.5 623.4,350.0 624.7,352.3 626.0,351.7 627.4,304.3 628.6,350.9 630.1,346.5 631.7,337.9 633.2,337.2 634.7,329.3 636.4,362.0 637.7,366.6 639.0,368.1 640.7,367.6 642.4,363.8 643.8,366.7 645.3,366.8 646.7,369.8 649.3,353.4 650.6,364.3 651.9,372.4 653.2,372.0 654.5,369.0 655.9,372.1 657.4,369.7 658.8,371.6 660.1,369.0 661.4,364.7 662.7,369.7 664.0,369.8 665.3,372.4 666.6,371.6 668.3,322.4 670.0,372.4 671.3,368.2 672.6,362.0 674.3,363.2 676.1,360.0 677.8,360.3 679.5,356.4 681.2,349.1 683.3,333.6 684.8,353.9 686.4,374.1 687.8,374.8 689.2,368.4 690.5,370.9 691.9,366.0 693.3,365.5 695.0,366.4 696.7,363.3 698.4,363.8 700.2,379.3 702.8,373.3 704.3,376.3 705.8,373.3 707.3,378.0 708.8,376.7 710.3,372.0 711.9,363.5 713.4,358.6 715.0,368.0 716.7,370.5 718.3,380.2 719.7,379.8 721.2,372.8 722.6,372.4 724.3,378.4 725.6,370.3 726.9,357.8 728.2,359.0 729.5,356.0 730.8,371.0 732.1,383.6 733.6,384.4 735.1,380.5 736.6,381.9 738.1,380.2 740.0,380.2 741.5,380.8 743.0,378.5 744.5,380.8 746.0,379.3 747.3,383.0 748.6,382.8 750.2,380.9 751.7,374.1 753.2,380.0 754.7,382.8 756.4,382.6 758.1,377.6 759.5,381.2 761.0,377.4 762.4,381.0 764.1,385.3 765.7,380.3 767.2,372.4 769.1,379.6 771.0,384.5 772.3,386.1 773.6,385.3 775.0,383.3 776.5,377.9 777.9,375.9 779.6,379.5 781.4,379.3 782.8,379.1 784.3,371.9 785.7,371.6 787.4,381.0 789.1,387.1 790.9,386.4 792.6,381.9 794.3,387.5 796.1,387.8 797.8,392.2 799.3,393.8 800.9,389.2 802.4,393.3 804.0,388.8 805.5,390.5 807.0,390.6 808.5,386.4 810.1,388.1 811.6,384.5 813.8,356.9 815.9,350.9 817.6,354.4 819.3,355.2 821.0,356.1 822.8,352.6 825.3,384.5 827.6,369.8 829.7,385.3 831.4,385.6 833.1,381.0 834.5,384.9 835.9,384.4 837.2,390.7 838.6,388.6 840.0,393.1 841.7,385.1 843.4,375.0 844.8,375.0 846.2,371.9 847.5,374.2 848.9,368.7 850.3,369.8 851.8,363.5 853.4,355.2 855.5,376.7 857.2,360.3 859.0,372.9 860.7,381.0 862.4,388.2 864.1,390.5 865.6,393.7 867.2,391.7 868.7,396.1 870.2,395.7 871.9,396.2 873.6,393.7 875.3,394.0 876.6,358.6 878.0,370.1 879.3,376.7 881.2,372.2 883.1,363.8 884.9,368.5 886.6,369.8 888.0,384.7 889.3,394.8 890.8,397.2 892.3,394.3 893.8,399.6 895.3,398.3 896.6,398.6 897.9,395.3 899.2,397.0 900.5,394.8 901.9,396.0 903.4,393.0 904.8,394.8 906.3,395.0 907.8,391.1 909.4,392.6 910.9,390.5 912.6,394.8 914.3,397.0 916.1,393.2 917.8,394.5 920.3,397.4 921.6,394.7 922.9,387.0 924.2,386.8 925.5,380.2 926.9,381.7 928.4,377.8 929.8,380.2 931.1,383.6 932.4,383.6 933.7,383.2 935.0,379.3 937.2,354.3 939.3,394.8 940.5,372.4 942.8,396.6 944.5,390.5 946.2,381.0 947.9,396.6 949.6,391.4 951.4,384.5 953.1,389.5 954.8,391.4 956.1,398.5 957.4,403.4 958.7,403.4 960.0,399.5 961.3,401.9 962.6,400.0 964.3,400.5 966.1,395.7 967.8,396.6 969.5,400.0 971.2,398.6 972.9,401.7 975.0,355.2 976.4,328.4 978.1,360.3 979.0,402.6 980.7,402.8 982.4,398.0 984.1,398.3 985.9,402.1 987.6,401.7 989.0,400.1 990.5,394.8 991.9,394.0 993.6,389.6 995.3,382.8 996.6,387.9 997.9,390.5 1000.0,387.1 1001.5,385.6 1002.9,379.8 1005.1,400.3 1007.0,402.7 1008.8,401.7 1010.5,400.1 1012.2,392.8 1013.9,391.5 1015.3,395.9 1016.8,393.5 1018.2,386.4 1020.0,384.7 1021.9,379.8 1023.3,362.3 1024.5,358.2 1025.5,376.9 1026.3,401.7 1027.3,392.2 1029.2,402.4 1030.7,405.0 1032.1,402.2 1033.6,404.6 1035.0,406.0 1036.5,402.2 1037.9,403.9 1039.6,406.7 1041.3,404.7 1043.0,407.6 1044.8,408.5 1046.7,406.1 1048.2,396.6 1049.7,402.7 1051.1,403.9 1052.9,407.7 1054.7,407.6 1056.9,382.7 1057.6,365.2 1058.4,380.6 1059.1,401.7 1060.6,409.0 1062.0,403.2 1063.0,410.5"/>
</svg>
<div class="a" style="left:162px;top:187px;width:901px;height:296px;overflow:hidden">
<div class="t" style="left:12px;top:1.03px;font-size:15.5px;line-height:19px;color:#FFFF00;font-weight:normal;letter-spacing:-0.6px">3,600</div>
<div class="t" style="left:109px;top:1.03px;font-size:15.5px;line-height:19px;color:#FFFF00;font-weight:normal;letter-spacing:-0.6px">3,620</div>
<div class="t" style="left:206px;top:1.03px;font-size:15.5px;line-height:19px;color:#FFFF00;font-weight:normal;letter-spacing:-0.6px">3,640</div>
<div class="t" style="left:303px;top:1.03px;font-size:15.5px;line-height:19px;color:#FFFF00;font-weight:normal;letter-spacing:-0.6px">3,660</div>
<div class="t" style="left:400px;top:1.03px;font-size:15.5px;line-height:19px;color:#FFFF00;font-weight:normal;letter-spacing:-0.6px">3,680</div>
<div class="t" style="left:496px;top:1.03px;font-size:15.5px;line-height:19px;color:#FFFF00;font-weight:normal;letter-spacing:-0.6px">3,700</div>
<div class="t" style="left:593px;top:1.03px;font-size:15.5px;line-height:19px;color:#FFFF00;font-weight:normal;letter-spacing:-0.6px">3,720</div>
<div class="t" style="left:690px;top:1.03px;font-size:15.5px;line-height:19px;color:#FFFF00;font-weight:normal;letter-spacing:-0.6px">3,740</div>
<div class="t" style="left:787px;top:1.03px;font-size:15.5px;line-height:19px;color:#FFFF00;font-weight:normal;letter-spacing:-0.6px">3,760</div>
<div class="t" style="left:884px;top:1.03px;font-size:15.5px;line-height:19px;color:#FFFF00;font-weight:normal;letter-spacing:-0.6px">3,780</div>
<div class="t" style="left:-566px;width:600px;text-align:right;top:22.43px;font-size:15.5px;line-height:19px;color:#FFFF00;font-weight:normal;letter-spacing:-0.6px">-10</div>
<div class="t" style="left:-566px;width:600px;text-align:right;top:39.43px;font-size:15.5px;line-height:19px;color:#FFFF00;font-weight:normal;letter-spacing:-0.6px">-20</div>
<div class="t" style="left:-566px;width:600px;text-align:right;top:55.43px;font-size:15.5px;line-height:19px;color:#FFFF00;font-weight:normal;letter-spacing:-0.6px">-30</div>
<div class="t" style="left:-566px;width:600px;text-align:right;top:72.43px;font-size:15.5px;line-height:19px;color:#FFFF00;font-weight:normal;letter-spacing:-0.6px">-40</div>
<div class="t" style="left:-566px;width:600px;text-align:right;top:88.43px;font-size:15.5px;line-height:19px;color:#FFFF00;font-weight:normal;letter-spacing:-0.6px">-50</div>
<div class="t" style="left:-566px;width:600px;text-align:right;top:105.43px;font-size:15.5px;line-height:19px;color:#FFFF00;font-weight:normal;letter-spacing:-0.6px">-60</div>
<div class="t" style="left:-566px;width:600px;text-align:right;top:121.43px;font-size:15.5px;line-height:19px;color:#FFFF00;font-weight:normal;letter-spacing:-0.6px">-70</div>
<div class="t" style="left:-566px;width:600px;text-align:right;top:138.43px;font-size:15.5px;line-height:19px;color:#FFFF00;font-weight:normal;letter-spacing:-0.6px">-80</div>
<div class="t" style="left:-566px;width:600px;text-align:right;top:154.43px;font-size:15.5px;line-height:19px;color:#FFFF00;font-weight:normal;letter-spacing:-0.6px">-90</div>
<div class="t" style="left:-566px;width:600px;text-align:right;top:170.43px;font-size:15.5px;line-height:19px;color:#FFFF00;font-weight:normal;letter-spacing:-0.6px">-100</div>
<div class="t" style="left:-566px;width:600px;text-align:right;top:187.43px;font-size:15.5px;line-height:19px;color:#FFFF00;font-weight:normal;letter-spacing:-0.6px">-110</div>
<div class="t" style="left:-566px;width:600px;text-align:right;top:203.43px;font-size:15.5px;line-height:19px;color:#FFFF00;font-weight:normal;letter-spacing:-0.6px">-120</div>
<div class="t" style="left:-566px;width:600px;text-align:right;top:220.43px;font-size:15.5px;line-height:19px;color:#FFFF00;font-weight:normal;letter-spacing:-0.6px">-130</div>
<div class="t" style="left:-566px;width:600px;text-align:right;top:236.43px;font-size:15.5px;line-height:19px;color:#FFFF00;font-weight:normal;letter-spacing:-0.6px">-140</div>
<div class="t" style="left:-566px;width:600px;text-align:right;top:253.43px;font-size:15.5px;line-height:19px;color:#FFFF00;font-weight:normal;letter-spacing:-0.6px">-150</div>
<div class="t" style="left:-566px;width:600px;text-align:right;top:269.43px;font-size:15.5px;line-height:19px;color:#FFFF00;font-weight:normal;letter-spacing:-0.6px">-160</div>
</div>
<div class="a" style="left:162px;top:483px;width:901px;height:2px;background:#F4F2E8"></div>
<div class="a" style="left:162px;top:485px;width:901px;height:23px;background:#000"></div>
<div class="t" style="left:178px;top:484.91px;font-size:16px;line-height:19px;color:#2A8CFF;font-weight:normal;letter-spacing:-0.15px">-93863,2Hz</div>
<div class="t" style="left:292px;top:484.91px;font-size:16px;line-height:19px;color:#2A8CFF;font-weight:normal;letter-spacing:-0.15px">-154,8dBm</div>
<div class="t" style="left:406px;top:484.91px;font-size:16px;line-height:19px;color:#2A8CFF;font-weight:normal;letter-spacing:-0.15px">3,606 137 MHz</div>
<div class="t" style="left:715px;top:484.91px;font-size:16px;line-height:19px;color:#2A8CFF;font-weight:normal;letter-spacing:-0.15px">-8033,3Hz</div>
<div class="t" style="left:829px;top:484.91px;font-size:16px;line-height:19px;color:#2A8CFF;font-weight:normal;letter-spacing:-0.15px">-61,3dBm</div>
<div class="t" style="left:938.5px;top:484.91px;font-size:16px;line-height:19px;color:#2A8CFF;font-weight:normal;letter-spacing:-0.15px">3,691 967 MHz</div>
<div class="t" style="left:164px;top:518.67px;font-size:14px;line-height:17px;color:#000;font-weight:normal;letter-spacing:-0.3px;">Pan:</div>
<div class="tr" style="left:213px;top:525px;width:235px;height:4px"></div>
<svg class="a" style="left:378px;top:514px" width="16" height="29" viewBox="0 0 16 29">
<polygon points="0,0 15,0 15,20 7.5,28 0,20" fill="#ECE9D8"/>
<polyline points="0.5,20 0.5,0.5 14,0.5" fill="none" stroke="#fff" stroke-width="1"/>
<polyline points="0.5,20 7.5,27.5" fill="none" stroke="#fff" stroke-width="1"/>
<polyline points="14.5,0 14.5,20 7.5,28" fill="none" stroke="#716F64" stroke-width="1"/>
<polyline points="13.5,1 13.5,19.5 7.5,26.8" fill="none" stroke="#ACA899" stroke-width="1"/>
</svg>
<div class="b" style="left:459px;top:515px;width:62px;height:25px;font-size:14px;"><span style="">Center</span></div>
<div class="t" style="left:553.5px;top:518.67px;font-size:14px;line-height:17px;color:#000;font-weight:normal;letter-spacing:-0.3px;">Zoom:</div>
<div class="tr" style="left:603px;top:525px;width:235px;height:4px"></div>
<svg class="a" style="left:603px;top:514px" width="15" height="29" viewBox="0 0 15 29">
<polygon points="0,0 14,0 14,20 7.0,28 0,20" fill="#ECE9D8"/>
<polyline points="0.5,20 0.5,0.5 13,0.5" fill="none" stroke="#fff" stroke-width="1"/>
<polyline points="0.5,20 7.0,27.5" fill="none" stroke="#fff" stroke-width="1"/>
<polyline points="13.5,0 13.5,20 7.0,28" fill="none" stroke="#716F64" stroke-width="1"/>
<polyline points="12.5,1 12.5,19.5 7.0,26.8" fill="none" stroke="#ACA899" stroke-width="1"/>
</svg>
<div class="b" style="left:859px;top:515px;width:51px;height:25px;font-size:14px;"><span style="">0.5x</span></div>
<div class="b" style="left:920px;top:515px;width:41px;height:25px;font-size:14px;"><span style="">1x</span></div>
<div class="b" style="left:971px;top:515px;width:41px;height:25px;font-size:14px;"><span style="">2x</span></div>
<div class="b" style="left:1022px;top:515px;width:41px;height:25px;font-size:14px;"><span style="">4x</span></div>
<div class="g" style="left:152px;top:558px;width:173px;height:190px"></div>
<div class="gl" style="left:161px;top:553px;font-size:14px">VFO</div>
<div class="b" style="left:172px;top:582px;width:62px;height:21px;font-size:14px;"><span style="">SPLT</span></div>
<div class="b" style="left:244px;top:582px;width:62px;height:21px;font-size:14px;"><span style="">A &gt; B</span></div>
<div class="b" style="left:172px;top:604px;width:62px;height:22px;font-size:14px;"><span style="">0 Beat</span></div>
<div class="b" style="left:244px;top:604px;width:62px;height:22px;font-size:14px;"><span style="">A &lt; B</span></div>
<div class="b" style="left:172px;top:626px;width:62px;height:22px;font-size:14px;"><span style="">IF-&gt;V</span></div>
<div class="b" style="left:244px;top:626px;width:62px;height:22px;font-size:14px;"><span style="">A &lt;&gt; B</span></div>
<div class="b" style="left:172px;top:668px;width:41px;height:21px;font-size:14px;"><span style="">XIT</span></div>
<div class="b" style="left:213px;top:668px;width:21px;height:21px;font-size:14px;"><span style="">0</span></div>
<div class="b" style="left:244px;top:668px;width:41px;height:21px;font-size:14px;"><span style="">RIT</span></div>
<div class="b" style="left:285px;top:668px;width:21px;height:21px;font-size:14px;"><span style="">0</span></div>
<div class="s" style="left:162px;top:690px;width:72px;height:21px;background:#fff;"></div>
<div class="sb" style="left:217px;top:692px;width:16px;height:9px"></div>
<div class="sb" style="left:217px;top:701px;width:16px;height:9px"></div>
<div class="a" style="left:223px;top:695px;width:0;height:0;border-left:2.5px solid transparent;border-right:2.5px solid transparent;border-bottom:3px solid #000"></div>
<div class="a" style="left:223px;top:704px;width:0;height:0;border-left:2.5px solid transparent;border-right:2.5px solid transparent;border-top:3px solid #000"></div>
<div class="t" style="left:164px;top:691.16px;font-size:14px;line-height:17px;color:#000;font-weight:normal;letter-spacing:-0.8px">0</div>
<div class="s" style="left:244px;top:690px;width:72px;height:21px;background:#fff;"></div>
<div class="sb" style="left:299px;top:692px;width:16px;height:9px"></div>
<div class="sb" style="left:299px;top:701px;width:16px;height:9px"></div>
<div class="a" style="left:305px;top:695px;width:0;height:0;border-left:2.5px solid transparent;border-right:2.5px solid transparent;border-bottom:3px solid #000"></div>
<div class="a" style="left:305px;top:704px;width:0;height:0;border-left:2.5px solid transparent;border-right:2.5px solid transparent;border-top:3px solid #000"></div>
<div class="t" style="left:246px;top:691.16px;font-size:14px;line-height:17px;color:#000;font-weight:normal;letter-spacing:-0.8px">260</div>
<div class="g" style="left:336px;top:558px;width:153px;height:101px"></div>
<div class="gl" style="left:345px;top:553px;font-size:14px">DSP</div>
<div class="b" style="left:351px;top:582px;width:62px;height:22px;font-size:14px;"><span style="">NR</span></div>
<div class="b" style="left:413px;top:582px;width:61px;height:22px;font-size:14px;"><span style="">ANF</span></div>
<div class="b" style="left:351px;top:604px;width:62px;height:22px;font-size:14px;"><span style="">NB</span></div>
<div class="b" style="left:413px;top:604px;width:61px;height:22px;font-size:14px;"><span style="">NB2</span></div>
<div class="yb" style="left:351px;top:626px;width:62px;height:22px;font-size:14px;"><span>SR</span></div>
<div class="b" style="left:413px;top:626px;width:61px;height:22px;font-size:14px;"><span style="">BIN</span></div>
<div class="g" style="left:500px;top:558px;width:132px;height:101px"></div>
<div class="gl" style="left:509px;top:553px;font-size:14px">Display Mode</div>
<div class="s" style="left:510px;top:582px;width:112px;height:23px;background:#fff;"></div>
<div class="cb" style="left:600px;top:584px;width:20px;height:19px"></div>
<div class="a" style="left:605.5px;top:592.0px;width:0;height:0;border-left:4.5px solid transparent;border-right:4.5px solid transparent;border-top:5px solid #000"></div>
<div class="t" style="left:514px;top:586.16px;font-size:14px;line-height:17px;color:#000;font-weight:normal;letter-spacing:-0.3px;">Panadapter</div>
<div class="yb" style="left:510px;top:621px;width:51px;height:25px;font-size:14px;"><span>AVG</span></div>
<div class="b" style="left:572px;top:621px;width:51px;height:25px;font-size:14px;"><span style="">Peak</span></div>
<div class="g" style="left:336px;top:666px;width:296px;height:82px"></div>
<div class="gl" style="left:345px;top:661px;font-size:14px">Sub RX</div>
<div class="tr" style="left:362px;top:688px;width:4px;height:44px;border-top:none;border-left:1px solid #ACA899;border-right:1px solid #fff;box-shadow:inset 1px 0 #716F64"></div>
<svg class="a" style="left:358px;top:686px" width="16" height="9" viewBox="0 0 16 9">
<polygon points="0,0 11,0 15,4.0 11,8 0,8" fill="#ECE9D8"/>
<polyline points="0.5,8 0.5,0.5 11,0.5 14.5,4.0" fill="none" stroke="#fff" stroke-width="1"/>
<polyline points="0,7.5 11,7.5 15,4.0" fill="none" stroke="#716F64" stroke-width="1"/>
<polyline points="1,6.5 11,6.5 14,4.0" fill="none" stroke="#ACA899" stroke-width="1"/>
</svg>
<div class="tr" style="left:526px;top:688px;width:4px;height:44px;border-top:none;border-left:1px solid #ACA899;border-right:1px solid #fff;box-shadow:inset 1px 0 #716F64"></div>
<svg class="a" style="left:522px;top:686px" width="16" height="9" viewBox="0 0 16 9">
<polygon points="0,0 11,0 15,4.0 11,8 0,8" fill="#ECE9D8"/>
<polyline points="0.5,8 0.5,0.5 11,0.5 14.5,4.0" fill="none" stroke="#fff" stroke-width="1"/>
<polyline points="0,7.5 11,7.5 15,4.0" fill="none" stroke="#716F64" stroke-width="1"/>
<polyline points="1,6.5 11,6.5 14,4.0" fill="none" stroke="#ACA899" stroke-width="1"/>
</svg>
<div class="tr" style="left:394px;top:688px;width:109px;height:4px"></div>
<svg class="a" style="left:494px;top:682px" width="10" height="19" viewBox="0 0 10 19">
<polygon points="0,0 9,0 9,13 4.5,18 0,13" fill="#ECE9D8"/>
<polyline points="0.5,13 0.5,0.5 8,0.5" fill="none" stroke="#fff" stroke-width="1"/>
<polyline points="0.5,13 4.5,17.5" fill="none" stroke="#fff" stroke-width="1"/>
<polyline points="8.5,0 8.5,13 4.5,18" fill="none" stroke="#716F64" stroke-width="1"/>
<polyline points="7.5,1 7.5,12.5 4.5,16.8" fill="none" stroke="#ACA899" stroke-width="1"/>
</svg>
<div class="a" style="left:398px;top:701px;width:1px;height:3px;background:#000"></div>
<div class="a" style="left:423px;top:701px;width:1px;height:3px;background:#000"></div>
<div class="a" style="left:448px;top:701px;width:1px;height:3px;background:#000"></div>
<div class="a" style="left:473px;top:701px;width:1px;height:3px;background:#000"></div>
<div class="a" style="left:498px;top:701px;width:1px;height:3px;background:#000"></div>
<div class="tr" style="left:394px;top:717px;width:109px;height:4px"></div>
<svg class="a" style="left:394px;top:711px" width="10" height="19" viewBox="0 0 10 19">
<polygon points="0,0 9,0 9,13 4.5,18 0,13" fill="#ECE9D8"/>
<polyline points="0.5,13 0.5,0.5 8,0.5" fill="none" stroke="#fff" stroke-width="1"/>
<polyline points="0.5,13 4.5,17.5" fill="none" stroke="#fff" stroke-width="1"/>
<polyline points="8.5,0 8.5,13 4.5,18" fill="none" stroke="#716F64" stroke-width="1"/>
<polyline points="7.5,1 7.5,12.5 4.5,16.8" fill="none" stroke="#ACA899" stroke-width="1"/>
</svg>
<div class="a" style="left:398px;top:731px;width:1px;height:3px;background:#000"></div>
<div class="a" style="left:423px;top:731px;width:1px;height:3px;background:#000"></div>
<div class="a" style="left:448px;top:731px;width:1px;height:3px;background:#000"></div>
<div class="a" style="left:473px;top:731px;width:1px;height:3px;background:#000"></div>
<div class="a" style="left:498px;top:731px;width:1px;height:3px;background:#000"></div>
<div class="b" style="left:551px;top:680px;width:72px;height:24px;font-size:14px;"><span style="">Sub RX</span></div>
<div class="s" style="left:550px;top:722px;width:13px;height:13px;background:#fff;"></div>
<div class="t" style="left:568px;top:720.67px;font-size:14px;line-height:17px;color:#000;font-weight:normal;letter-spacing:-0.3px;">Swap</div>
<div class="g" style="left:644px;top:558px;width:428px;height:190px"></div>
<div class="gl" style="left:652px;top:553px;font-size:14px">Mode Specific Controls - Phone</div>
<div class="t" style="left:665.5px;top:583.67px;font-size:14px;line-height:17px;color:#000;font-weight:normal;letter-spacing:-0.3px;">Mic Gain:</div>
<div class="tr" style="left:732px;top:590px;width:114px;height:4px"></div>
<svg class="a" style="left:807px;top:584px" width="10" height="19" viewBox="0 0 10 19">
<polygon points="0,0 9,0 9,14 4.5,18 0,14" fill="#ECE9D8"/>
<polyline points="0.5,14 0.5,0.5 8,0.5" fill="none" stroke="#fff" stroke-width="1"/>
<polyline points="0.5,14 4.5,17.5" fill="none" stroke="#fff" stroke-width="1"/>
<polyline points="8.5,0 8.5,14 4.5,18" fill="none" stroke="#716F64" stroke-width="1"/>
<polyline points="7.5,1 7.5,13.5 4.5,16.8" fill="none" stroke="#ACA899" stroke-width="1"/>
</svg>
<div class="s" style="left:858px;top:582px;width:60px;height:22px;background:#fff;"></div>
<div class="sb" style="left:901px;top:584px;width:16px;height:9px"></div>
<div class="sb" style="left:901px;top:593px;width:16px;height:10px"></div>
<div class="a" style="left:907px;top:587px;width:0;height:0;border-left:2.5px solid transparent;border-right:2.5px solid transparent;border-bottom:3px solid #000"></div>
<div class="a" style="left:907px;top:597px;width:0;height:0;border-left:2.5px solid transparent;border-right:2.5px solid transparent;border-top:3px solid #000"></div>
<div class="t" style="left:860px;top:583.66px;font-size:14px;line-height:17px;color:#000;font-weight:normal;letter-spacing:-0.8px">50</div>
<div class="b" style="left:663px;top:611px;width:59px;height:23px;font-size:14px;"><span style="">COMP</span></div>
<div class="tr" style="left:732px;top:619px;width:114px;height:4px"></div>
<svg class="a" style="left:748px;top:613px" width="10" height="19" viewBox="0 0 10 19">
<polygon points="0,0 9,0 9,14 4.5,18 0,14" fill="#ECE9D8"/>
<polyline points="0.5,14 0.5,0.5 8,0.5" fill="none" stroke="#fff" stroke-width="1"/>
<polyline points="0.5,14 4.5,17.5" fill="none" stroke="#fff" stroke-width="1"/>
<polyline points="8.5,0 8.5,14 4.5,18" fill="none" stroke="#716F64" stroke-width="1"/>
<polyline points="7.5,1 7.5,13.5 4.5,16.8" fill="none" stroke="#ACA899" stroke-width="1"/>
</svg>
<div class="s" style="left:858px;top:611px;width:60px;height:22px;background:#fff;"></div>
<div class="sb" style="left:901px;top:613px;width:16px;height:9px"></div>
<div class="sb" style="left:901px;top:622px;width:16px;height:10px"></div>
<div class="a" style="left:907px;top:616px;width:0;height:0;border-left:2.5px solid transparent;border-right:2.5px solid transparent;border-bottom:3px solid #000"></div>
<div class="a" style="left:907px;top:626px;width:0;height:0;border-left:2.5px solid transparent;border-right:2.5px solid transparent;border-top:3px solid #000"></div>
<div class="t" style="left:860px;top:612.66px;font-size:14px;line-height:17px;color:#000;font-weight:normal;letter-spacing:-0.8px">3</div>
<div class="b" style="left:663px;top:641px;width:59px;height:23px;font-size:14px;"><span style="">CPDR</span></div>
<div class="tr" style="left:732px;top:649px;width:114px;height:4px"></div>
<svg class="a" style="left:764px;top:643px" width="10" height="19" viewBox="0 0 10 19">
<polygon points="0,0 9,0 9,14 4.5,18 0,14" fill="#ECE9D8"/>
<polyline points="0.5,14 0.5,0.5 8,0.5" fill="none" stroke="#fff" stroke-width="1"/>
<polyline points="0.5,14 4.5,17.5" fill="none" stroke="#fff" stroke-width="1"/>
<polyline points="8.5,0 8.5,14 4.5,18" fill="none" stroke="#716F64" stroke-width="1"/>
<polyline points="7.5,1 7.5,13.5 4.5,16.8" fill="none" stroke="#ACA899" stroke-width="1"/>
</svg>
<div class="s" style="left:858px;top:641px;width:60px;height:22px;background:#fff;"></div>
<div class="sb" style="left:901px;top:643px;width:16px;height:9px"></div>
<div class="sb" style="left:901px;top:652px;width:16px;height:10px"></div>
<div class="a" style="left:907px;top:646px;width:0;height:0;border-left:2.5px solid transparent;border-right:2.5px solid transparent;border-bottom:3px solid #000"></div>
<div class="a" style="left:907px;top:656px;width:0;height:0;border-left:2.5px solid transparent;border-right:2.5px solid transparent;border-top:3px solid #000"></div>
<div class="t" style="left:860px;top:642.66px;font-size:14px;line-height:17px;color:#000;font-weight:normal;letter-spacing:-0.8px">3</div>
<div class="b" style="left:663px;top:670px;width:59px;height:23px;font-size:14px;"><span style="">VOX</span></div>
<div class="tr" style="left:732px;top:678px;width:114px;height:4px"></div>
<svg class="a" style="left:821px;top:672px" width="10" height="19" viewBox="0 0 10 19">
<polygon points="0,0 9,0 9,14 4.5,18 0,14" fill="#ECE9D8"/>
<polyline points="0.5,14 0.5,0.5 8,0.5" fill="none" stroke="#fff" stroke-width="1"/>
<polyline points="0.5,14 4.5,17.5" fill="none" stroke="#fff" stroke-width="1"/>
<polyline points="8.5,0 8.5,14 4.5,18" fill="none" stroke="#716F64" stroke-width="1"/>
<polyline points="7.5,1 7.5,13.5 4.5,16.8" fill="none" stroke="#ACA899" stroke-width="1"/>
</svg>
<div class="s" style="left:858px;top:670px;width:60px;height:22px;background:#fff;"></div>
<div class="sb" style="left:901px;top:672px;width:16px;height:9px"></div>
<div class="sb" style="left:901px;top:681px;width:16px;height:10px"></div>
<div class="a" style="left:907px;top:675px;width:0;height:0;border-left:2.5px solid transparent;border-right:2.5px solid transparent;border-bottom:3px solid #000"></div>
<div class="a" style="left:907px;top:685px;width:0;height:0;border-left:2.5px solid transparent;border-right:2.5px solid transparent;border-top:3px solid #000"></div>
<div class="t" style="left:860px;top:671.66px;font-size:14px;line-height:17px;color:#000;font-weight:normal;letter-spacing:-0.8px">848</div>
<div class="b" style="left:663px;top:700px;width:59px;height:23px;font-size:14px;"><span style="">GATE</span></div>
<div class="tr" style="left:732px;top:708px;width:114px;height:4px"></div>
<svg class="a" style="left:806px;top:702px" width="10" height="19" viewBox="0 0 10 19">
<polygon points="0,0 9,0 9,14 4.5,18 0,14" fill="#ECE9D8"/>
<polyline points="0.5,14 0.5,0.5 8,0.5" fill="none" stroke="#fff" stroke-width="1"/>
<polyline points="0.5,14 4.5,17.5" fill="none" stroke="#fff" stroke-width="1"/>
<polyline points="8.5,0 8.5,14 4.5,18" fill="none" stroke="#716F64" stroke-width="1"/>
<polyline points="7.5,1 7.5,13.5 4.5,16.8" fill="none" stroke="#ACA899" stroke-width="1"/>
</svg>
<div class="s" style="left:858px;top:700px;width:60px;height:22px;background:#fff;"></div>
<div class="sb" style="left:901px;top:702px;width:16px;height:9px"></div>
<div class="sb" style="left:901px;top:711px;width:16px;height:10px"></div>
<div class="a" style="left:907px;top:705px;width:0;height:0;border-left:2.5px solid transparent;border-right:2.5px solid transparent;border-bottom:3px solid #000"></div>
<div class="a" style="left:907px;top:715px;width:0;height:0;border-left:2.5px solid transparent;border-right:2.5px solid transparent;border-top:3px solid #000"></div>
<div class="t" style="left:860px;top:701.66px;font-size:14px;line-height:17px;color:#000;font-weight:normal;letter-spacing:-0.8px">-47</div>
<div class="a" style="left:735px;top:690px;width:106px;height:4px;background:#000"></div>
<div class="a" style="left:735px;top:720px;width:106px;height:4px;background:#000"></div>
<div class="t" style="left:938px;top:583.17px;font-size:14px;line-height:17px;color:#000;font-weight:normal;letter-spacing:-0.2px">Transmit Profile:</div>
<div class="s" style="left:930px;top:601px;width:122px;height:24px;background:#fff;"></div>
<div class="cb" style="left:1030px;top:603px;width:20px;height:20px"></div>
<div class="a" style="left:1035.5px;top:611.5px;width:0;height:0;border-left:4.5px solid transparent;border-right:4.5px solid transparent;border-top:5px solid #000"></div>
<div class="t" style="left:934px;top:605.66px;font-size:14px;line-height:17px;color:#000;font-weight:normal;letter-spacing:-0.3px;">Conventional</div>
<div class="s" style="left:930px;top:653px;width:12px;height:13px;background:#fff;"></div>
<div class="t" style="left:947.5px;top:645.17px;font-size:14px;line-height:17px;color:#000;font-weight:normal;letter-spacing:-0.5px">Show TX Filter on</div>
<div class="t" style="left:947.5px;top:659.67px;font-size:14px;line-height:17px;color:#000;font-weight:normal;letter-spacing:-0.3px;">Display</div>
</body></html>
